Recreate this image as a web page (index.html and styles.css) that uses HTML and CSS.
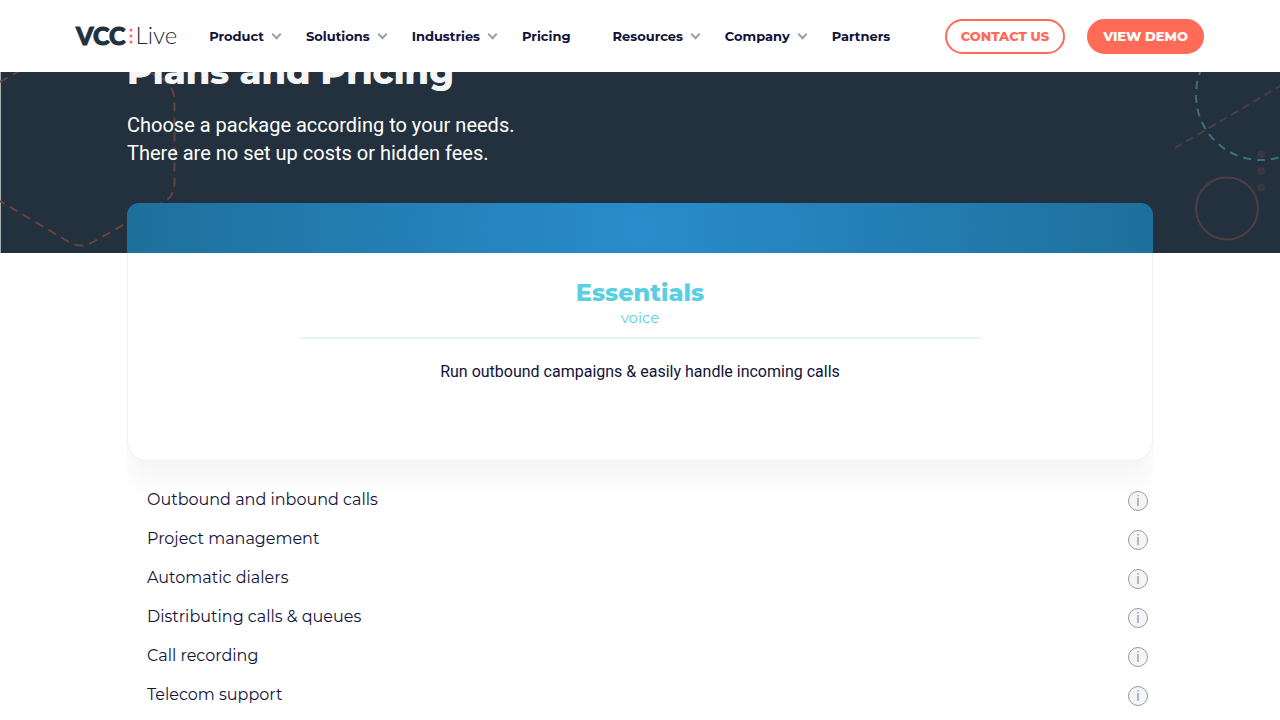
FILE: index.html
```html
<!DOCTYPE html>
<html lang="en">
<head>
    <meta charset="UTF-8">
    <meta name="viewport" content="width=device-width, initial-scale=1.0">
    <title>Plans and Pricing - VCC Live</title>
    <link rel="stylesheet" href="styles.css">
</head>
<body>
    <header class="header">
        <a href="#" class="logo" aria-label="VCC Live">
            <span class="logo-bold">VCC</span>
            <svg class="logo-dots" width="4" height="16" viewBox="0 0 4 16" fill="#ff6b57">
                <circle cx="2" cy="2" r="1.5"/>
                <circle cx="2" cy="8" r="1.5"/>
                <circle cx="2" cy="14" r="1.5"/>
            </svg>
            <span class="logo-light">Live</span>
        </a>
        <nav class="nav">
            <a href="#" class="has-menu">Product</a>
            <a href="#" class="has-menu">Solutions</a>
            <a href="#" class="has-menu">Industries</a>
            <a href="#">Pricing</a>
            <a href="#" class="has-menu">Resources</a>
            <a href="#" class="has-menu">Company</a>
            <a href="#">Partners</a>
        </nav>
        <div class="actions">
            <a href="#" class="btn btn-outline">CONTACT US</a>
            <a href="#" class="btn">VIEW DEMO</a>
        </div>
    </header>

    <main>
        <section class="hero">
            <svg class="shape shape-left" width="180" height="253" viewBox="0 0 180 253" fill="none">
                <path d="M0 82 L70 43 Q81 37 92 43 L161 78 Q174 86 174.500 100 V185 Q174 197 162 203 L93 242 Q81 249 69 242 L0 201" stroke="#68423f" stroke-width="2" stroke-dasharray="9 6"/>
            </svg>
            <svg class="shape shape-right" width="110" height="253" viewBox="1170 0 110 253" fill="none">
                <circle cx="1261" cy="95" r="65" stroke="#397080" stroke-width="2" stroke-dasharray="8 6"/>
                <path d="M1175 148 L1280 86" stroke="#503d43" stroke-width="2" stroke-dasharray="8 5"/>
                <circle cx="1227" cy="208.500" r="31" stroke="#503d43" stroke-width="2"/>
                <g fill="#3b3740">
                    <circle cx="1261" cy="154.500" r="4"/>
                    <circle cx="1261" cy="171" r="4"/>
                    <circle cx="1261" cy="187.500" r="4"/>
                </g>
            </svg>
            <div class="container">
                <h1>Plans and Pricing</h1>
                <p>Choose a package according to your needs.<br>There are no set up costs or hidden fees.</p>
            </div>
        </section>

        <section class="container plan">
            <div class="card">
                <div class="card-top"></div>
                <div class="card-body">
                    <h2>Essentials</h2>
                    <p class="plan-type">voice</p>
                    <hr>
                    <p class="plan-text">Run outbound campaigns &amp; easily handle incoming calls</p>
                </div>
            </div>
            <ul class="features">
                <li>Outbound and inbound calls <button class="info" aria-label="More about calls">i</button></li>
                <li>Project management <button class="info" aria-label="More about project management">i</button></li>
                <li>Automatic dialers <button class="info" aria-label="More about dialers">i</button></li>
                <li>Distributing calls &amp; queues <button class="info" aria-label="More about queues">i</button></li>
                <li>Call recording <button class="info" aria-label="More about call recording">i</button></li>
                <li>Telecom support <button class="info" aria-label="More about telecom support">i</button></li>
            </ul>
        </section>
    </main>
</body>
</html>
```
FILE: styles.css
```css
*,
*::before,
*::after {
    box-sizing: border-box;
}

body {
    margin: 0;
    background: #fff;
    color: #12123a;
    font-family: Montserrat, Inter, sans-serif;
}

a {
    color: inherit;
    text-decoration: none;
}

.container {
    width: 100%;
    max-width: 1026px;
    margin: 0 auto;
}

/* Header */
.header {
    position: fixed;
    top: 0;
    left: 0;
    right: 0;
    z-index: 10;
    display: flex;
    align-items: center;
    height: 72px;
    padding: 0 76px;
    background: #fff;
}

.logo {
    display: flex;
    align-items: center;
    gap: 4px;
    margin-right: 32px;
    padding-bottom: 2px;
    color: #22313d;
    font-family: Lato, sans-serif;
    font-size: 25px;
    line-height: 26px;
}

.logo-bold {
    font-weight: 900;
    -webkit-text-stroke: 1px #22313d;
}

.logo-dots {
    margin-top: 2px;
}

.logo-light {
    margin-left: -2px;
    font-size: 24px;
    font-weight: 300;
}

.nav {
    display: flex;
    gap: 42px;
    font-size: 13px;
    font-weight: 700;
    line-height: 20px;
}

.nav a {
    position: relative;
}

.has-menu::after {
    content: "";
    position: absolute;
    right: -16px;
    top: 5px;
    width: 7px;
    height: 7px;
    border: solid #9a9fa5;
    border-width: 0 2px 2px 0;
    transform: rotate(45deg);
}

.actions {
    display: flex;
    gap: 22px;
    margin-left: auto;
}

.btn {
    padding: 0 14px;
    border: 2px solid #ff6b57;
    border-radius: 18px;
    background: #ff6b57;
    color: #fff;
    font-size: 13px;
    font-weight: 800;
    line-height: 31px;
    white-space: nowrap;
}

.btn-outline {
    background: #fff;
    color: #ff6b57;
}

/* Hero */
.hero {
    position: relative;
    padding: 52px 0 86px;
    background: #22313d;
    box-shadow: inset 1px 0 #a5adb2;
    color: #fff;
}

.shape {
    position: absolute;
    top: 0;
}

.shape-left {
    left: 0;
}

.shape-right {
    right: 0;
}

.hero .container {
    position: relative;
}

.hero h1 {
    margin: 0 0 19px;
    color: #f5f5f5;
    font-size: 35px;
    font-weight: 800;
    line-height: 40px;
}

.hero p {
    margin: 0;
    font-family: Roboto, sans-serif;
    font-size: 20px;
    line-height: 28px;
}

/* Plan */
.plan {
    position: relative;
    margin-top: -50px;
}

.card {
    border-radius: 12px 12px 20px 20px;
    box-shadow: 0 20px 24px rgba(0, 0, 0, 0.04);
    clip-path: inset(0 0 -60px 0);
}

.card-top {
    height: 50px;
    border-radius: 12px 12px 0 0;
    background: radial-gradient(circle, #298ccc, #1e709b);
}

.card-body {
    min-height: 208px;
    padding: 24px 25px;
    border: 1px solid #f0f0f0;
    border-top: 0;
    border-radius: 0 0 20px 20px;
    background: #fff;
    text-align: center;
}

.card h2 {
    margin: 0;
    color: #5acfe2;
    font-size: 24px;
    font-weight: 800;
    line-height: 32px;
}

.plan-type {
    margin: 0;
    color: #5acfe2;
    font-size: 15px;
    line-height: 18px;
}

.card hr {
    width: 70%;
    height: 2px;
    margin: 10px auto 22px;
    border: 0;
    background: #e6f5fc;
}

.plan-text {
    margin: 0;
    font-family: Roboto, sans-serif;
    font-size: 16px;
    line-height: 22px;
}

.features {
    position: relative;
    margin: 0;
    padding: 19px 5px 0 20px;
    list-style: none;
    font-size: 16px;
    line-height: 39px;
}

.features li {
    display: flex;
    justify-content: space-between;
    align-items: center;
}

.info {
    width: 20px;
    height: 20px;
    margin-top: 2px;
    padding: 0;
    border: 1px solid #999;
    border-radius: 50%;
    background: #f5f5f5;
    color: #999;
    font-family: Roboto, sans-serif;
    font-size: 14px;
    line-height: 18px;
    cursor: pointer;
}
```
